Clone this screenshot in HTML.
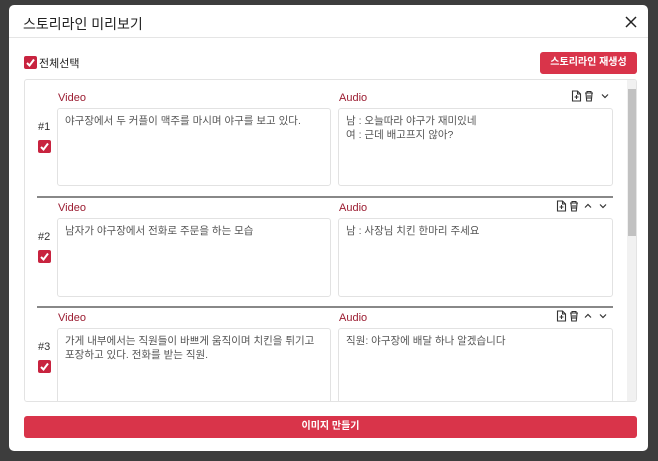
<!DOCTYPE html>
<html><head><meta charset="utf-8"><style>
*{box-sizing:border-box;margin:0;padding:0}
body{width:658px;height:461px;overflow:hidden;background:#3d3d3d;font-family:"Liberation Sans","Noto Sans CJK KR",sans-serif;position:relative}
.modal{position:absolute;left:9px;top:5px;width:639px;height:446px;background:#fff;border-radius:5px}
.title{position:absolute;left:14px;top:9px;font-size:14px;color:#222}
.close{position:absolute;right:11px;top:10px}
.hr{position:absolute;left:0;right:0;top:32px;border-top:1px solid #e5e5e5}
.cb{position:absolute;width:13px;height:13px;background:#c8233f;border-radius:2px}
.cb svg{position:absolute;left:1px;top:1px}
.all{position:absolute;left:30px;top:50px;font-size:11px;color:#222}
.regen{position:absolute;left:531px;top:47px;width:97px;height:22px;background:#d9344a;border-radius:3px;color:#fff;font-size:10px;text-align:center;line-height:22px;font-weight:bold}
.box{position:absolute;left:15px;top:74px;width:613px;height:323px;border:1px solid #e3e3e3;border-radius:3px;overflow:hidden}
.sb{position:absolute;left:602px;top:0;width:10px;height:323px;background:#f1f1f1}
.thumb{position:absolute;left:1px;top:9px;width:8px;height:147px;background:#c1c1c1}
.lbl{position:absolute;font-size:11px;color:#9b1c31}
.ta{position:absolute;border:1px solid #e2e2e2;border-radius:3px;font-size:10.5px;color:#555;padding:5px 7px;line-height:14px}
.num{position:absolute;font-size:11px;color:#333}
.div{position:absolute;left:12px;width:576px;border-top:2px solid #888}
.icons{position:absolute;font-size:10px;color:#333}
.bottom{position:absolute;left:15px;top:411px;width:613px;height:22px;background:#d9344a;border-radius:3px;color:#fff;font-size:10px;text-align:center;line-height:22px;font-weight:bold}
</style></head><body>
<div class="modal">
<div class="title">스토리라인 미리보기</div>
<div class="close"><svg width="12" height="12" viewBox="0 0 12 12"><path d="M1 1l10 10M11 1L1 11" stroke="#222" stroke-width="1.5"/></svg></div>
<div class="hr"></div>
<div class="cb" style="left:15px;top:51px"><svg width="11" height="11" viewBox="0 0 11 11"><path d="M2 6l2.5 2.5L9 2.5" stroke="#fff" stroke-width="2" fill="none"/></svg></div>
<div class="all">전체선택</div>
<div class="regen">스토리라인 재생성</div>
<div class="box">
<div class="sb"><div class="thumb"></div></div>
<!-- row1 -->
<div class="lbl" style="left:33px;top:12px">Video</div>
<div class="lbl" style="left:314px;top:12px">Audio</div>
<div class="num" style="left:13px;top:41px">#1</div>
<div class="cb" style="left:13px;top:60px"><svg width="11" height="11" viewBox="0 0 11 11"><path d="M2 6l2.5 2.5L9 2.5" stroke="#fff" stroke-width="2" fill="none"/></svg></div>
<div class="ta" style="left:32px;top:28px;width:274px;height:78px">야구장에서 두 커플이 맥주를 마시며 야구를 보고 있다.</div>
<div class="ta" style="left:313px;top:28px;width:275px;height:78px">남 : 오늘따라 야구가 재미있네<br>여 : 근데 배고프지 않아?</div>
<div class="icons" style="left:546px;top:10px">
<svg width="44" height="12" viewBox="0 0 44 12"><path d="M1.5 1h5l3 3v7h-8z M6.5 1v3h3 M5.5 5v4 M3.5 7h4" stroke="#333" fill="none" stroke-width="1.1"/><path d="M14 3h8M16 3V1.5h4V3M15 3.5l.7 7.5h4.6l.7-7.5M17 5v4M19 5v4" stroke="#333" fill="none" stroke-width="1.1"/><path d="M31 4.5l3 3 3-3" stroke="#333" fill="none" stroke-width="1.2"/></svg></div>
<div class="div" style="top:116px"></div>
<!-- row2 -->
<div class="lbl" style="left:33px;top:122px">Video</div>
<div class="lbl" style="left:314px;top:122px">Audio</div>
<div class="num" style="left:13px;top:151px">#2</div>
<div class="cb" style="left:13px;top:170px"><svg width="11" height="11" viewBox="0 0 11 11"><path d="M2 6l2.5 2.5L9 2.5" stroke="#fff" stroke-width="2" fill="none"/></svg></div>
<div class="ta" style="left:32px;top:138px;width:274px;height:79px">남자가 야구장에서 전화로 주문을 하는 모습</div>
<div class="ta" style="left:313px;top:138px;width:275px;height:79px">남 : 사장님 치킨 한마리 주세요</div>
<div class="icons" style="left:531px;top:120px">
<svg width="60" height="12" viewBox="0 0 60 12"><path d="M1.5 1h5l3 3v7h-8z M6.5 1v3h3 M5.5 5v4 M3.5 7h4" stroke="#333" fill="none" stroke-width="1.1"/><path d="M14 3h8M16 3V1.5h4V3M15 3.5l.7 7.5h4.6l.7-7.5M17 5v4M19 5v4" stroke="#333" fill="none" stroke-width="1.1"/><path d="M29 7.5l3-3 3 3" stroke="#333" fill="none" stroke-width="1.2"/><path d="M44 4.5l3 3 3-3" stroke="#333" fill="none" stroke-width="1.2"/></svg></div>
<div class="div" style="top:226px"></div>
<!-- row3 -->
<div class="lbl" style="left:33px;top:232px">Video</div>
<div class="lbl" style="left:314px;top:232px">Audio</div>
<div class="num" style="left:13px;top:261px">#3</div>
<div class="cb" style="left:13px;top:280px"><svg width="11" height="11" viewBox="0 0 11 11"><path d="M2 6l2.5 2.5L9 2.5" stroke="#fff" stroke-width="2" fill="none"/></svg></div>
<div class="ta" style="left:32px;top:248px;width:274px;height:90px">가게 내부에서는 직원들이 바쁘게 움직이며 치킨을 튀기고 포장하고 있다. 전화를 받는 직원.</div>
<div class="ta" style="left:313px;top:248px;width:275px;height:90px">직원: 야구장에 배달 하나 알겠습니다</div>
<div class="icons" style="left:531px;top:230px">
<svg width="60" height="12" viewBox="0 0 60 12"><path d="M1.5 1h5l3 3v7h-8z M6.5 1v3h3 M5.5 5v4 M3.5 7h4" stroke="#333" fill="none" stroke-width="1.1"/><path d="M14 3h8M16 3V1.5h4V3M15 3.5l.7 7.5h4.6l.7-7.5M17 5v4M19 5v4" stroke="#333" fill="none" stroke-width="1.1"/><path d="M29 7.5l3-3 3 3" stroke="#333" fill="none" stroke-width="1.2"/><path d="M44 4.5l3 3 3-3" stroke="#333" fill="none" stroke-width="1.2"/></svg></div>
</div>
<div class="bottom">이미지 만들기</div>
</div>
</body></html>
